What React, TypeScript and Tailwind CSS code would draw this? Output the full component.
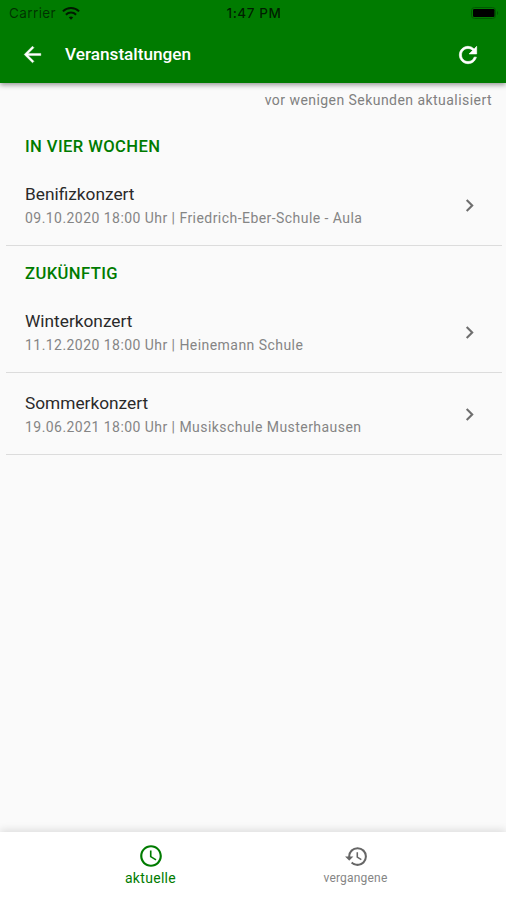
import { MdAccessTime, MdChevronRight, MdHistory } from 'react-icons/md'

interface EventItem {
  title: string
  details: string
}

interface EventSection {
  label: string
  events: EventItem[]
}

const sections: EventSection[] = [
  {
    label: 'IN VIER WOCHEN',
    events: [{ title: 'Benifizkonzert', details: '09.10.2020 18:00 Uhr | Friedrich-Eber-Schule - Aula' }],
  },
  {
    label: 'ZUKÜNFTIG',
    events: [
      { title: 'Winterkonzert', details: '11.12.2020 18:00 Uhr | Heinemann Schule' },
      { title: 'Sommerkonzert', details: '19.06.2021 18:00 Uhr | Musikschule Musterhausen' },
    ],
  },
]

function StatusBar() {
  return (
    <div className="grid h-[26px] grid-cols-3 items-center pl-[9px] pr-[7px] font-[Inter,sans-serif] text-[13.5px] text-black/75">
      <div className="flex items-center gap-[6px]">
        <span className="pt-px tracking-[0.4px] text-black/60">Carrier</span>
        <svg className="h-[13px] w-[18px]" viewBox="0 0 18 13" fill="none" stroke="#001a00" strokeWidth="2">
          <path d="M.9 4.4a11.5 11.5 0 0 1 16.2 0" />
          <path d="M3.9 7.7a7.2 7.2 0 0 1 10.2 0" />
          <path d="M9 12.8 6.8 10.5a3.1 3.1 0 0 1 4.4 0Z" fill="#001a00" stroke="none" />
        </svg>
      </div>
      <span className="pt-px text-center font-medium tracking-[0.6px]">1:47 PM</span>
      <svg className="h-[12px] w-[28px] justify-self-end" viewBox="0 0 28 12">
        <rect x="0.5" y="0.5" width="24" height="11" rx="3" fill="none" stroke="#005a00" />
        <rect x="2" y="2" width="21.5" height="8" rx="1.2" fill="#000" />
        <path d="M26 4v4c1.6-.5 1.6-3.5 0-4Z" fill="#005a00" />
      </svg>
    </div>
  )
}

function EventRow({ title, details }: EventItem) {
  return (
    <li className="flex h-[82px] items-center justify-between border-b border-[#dcdcdc] pl-[19px] pr-[20px]">
      <div className="pt-[2px]">
        <p className="text-[17.3px] leading-6 text-[#2a2a2a]">{title}</p>
        <p className="text-[14px] leading-6 tracking-[0.45px] text-[#858585]">{details}</p>
      </div>
      <MdChevronRight className="mt-px size-[25px] text-[#6e6e6e]" />
    </li>
  )
}

export default function App() {
  return (
    <div className="flex h-[900px] w-[506px] flex-col overflow-hidden bg-[#fafafa] font-[Roboto,sans-serif]">
      <header className="z-10 h-[83px] shrink-0 bg-[#007b00] shadow-[0_2px_5px_rgba(0,0,0,0.4)]">
        <StatusBar />
        <div className="flex h-[57px] items-center pl-5 pr-[25px] text-white">
          <svg className="size-[25px]" viewBox="0 0 24 24" fill="currentColor" stroke="currentColor" strokeWidth="0.4">
            <path d="M20 11H7.83l5.59-5.59L12 4l-8 8 8 8 1.41-1.41L7.83 13H20v-2z" />
          </svg>
          <h1 className="ml-5 flex-1 text-[17.2px] font-medium">Veranstaltungen</h1>
          <svg className="size-[26px]" viewBox="0 0 24 24" fill="currentColor" stroke="currentColor" strokeWidth="0.6">
            <path d="M17.65 6.35A7.958 7.958 0 0 0 12 4c-4.42 0-7.99 3.58-7.99 8s3.57 8 7.99 8c3.73 0 6.84-2.55 7.73-6h-2.08A5.99 5.99 0 0 1 12 18c-3.31 0-6-2.69-6-6s2.69-6 6-6c1.66 0 3.14.69 4.22 1.78L13 11h7V4l-2.35 2.35z" />
          </svg>
        </div>
      </header>

      <main className="flex-1">
        <p className="h-[36px] pr-[14px] pt-[5px] text-right text-[14px] leading-6 tracking-[0.45px] text-[#808080]">
          vor wenigen Sekunden aktualisiert
        </p>
        {sections.map((section) => (
          <section key={section.label} className="pl-[6px] pr-[4px]">
            <h2 className="h-[45px] pl-[19px] pt-[16px] text-[16.6px] font-medium leading-6 tracking-[0.4px] text-[#007b00]">
              {section.label}
            </h2>
            <ul>
              {section.events.map((event) => (
                <EventRow key={event.title} {...event} />
              ))}
            </ul>
          </section>
        ))}
      </main>

      <nav className="flex h-[68px] shrink-0 justify-center bg-white shadow-[0_-2px_8px_rgba(0,0,0,0.12)]">
        <button className="flex w-[205px] flex-col items-center pt-[11px] text-[#007b00]">
          <MdAccessTime className="size-[26px]" />
          <span className="text-[14px] leading-[18px] tracking-[0.3px]">aktuelle</span>
        </button>
        <button className="flex w-[205px] flex-col items-center pt-[12px] text-[#666]">
          <MdHistory className="ml-[2px] size-[25px]" />
          <span className="text-[12px] leading-[18px] tracking-[0.2px] text-[#858585]">vergangene</span>
        </button>
      </nav>
    </div>
  )
}
